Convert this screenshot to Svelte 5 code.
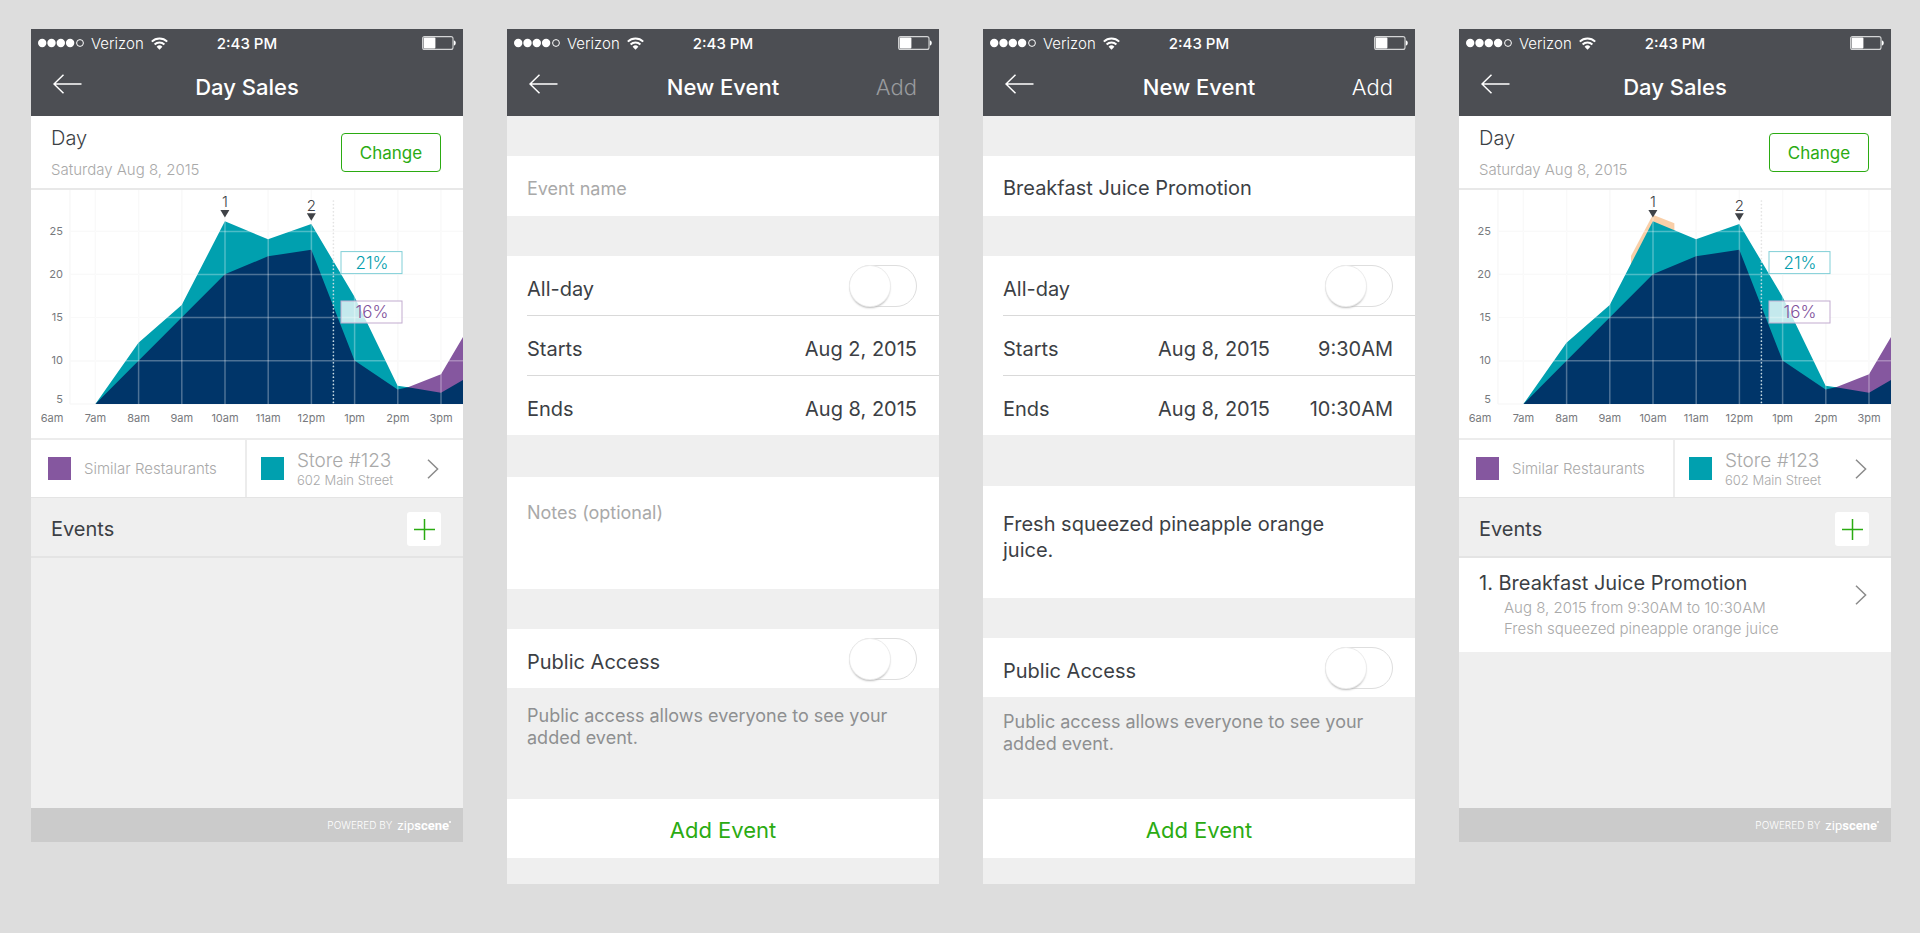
<script>
  const screens = [
    { id: 'sales-empty', type: 'sales', title: 'Day Sales', events: [] },
    { id: 'event-blank', type: 'form', title: 'New Event', name: '', notes: '', start: ['Aug 2, 2015'], end: ['Aug 8, 2015'] },
    {
      id: 'event-filled',
      type: 'form',
      title: 'New Event',
      name: 'Breakfast Juice Promotion',
      notes: 'Fresh squeezed pineapple orange juice.',
      start: ['Aug 8, 2015', '9:30AM'],
      end: ['Aug 8, 2015', '10:30AM'],
    },
    {
      id: 'sales-event',
      type: 'sales',
      title: 'Day Sales',
      events: [
        {
          name: 'Breakfast Juice Promotion',
          when: 'Aug 8, 2015 from 9:30AM to 10:30AM',
          notes: 'Fresh squeezed pineapple orange juice',
        },
      ],
    },
  ];

  // Chart geometry, in viewBox units
  const hours = ['7am', '8am', '9am', '10am', '11am', '12pm', '1pm', '2pm', '3pm'];
  const hourX = (i) => 64.4 + i * 43.2;
  const levels = [
    { label: '25', y: 41.4, textY: 45 },
    { label: '20', y: 84.4, textY: 88 },
    { label: '15', y: 127.5, textY: 131 },
    { label: '10', y: 170.8, textY: 174 },
    { label: '5', y: 214, textY: 213 },
  ];
  const storeArea = '64.4,214 107.5,152.7 150.7,115 193.9,31.3 237,49.3 280.3,34 323.5,106.7 366.6,195.7 377,197.3 377,214';
  const sharedArea = '64.4,214 107.5,170.7 150.7,127.4 193.9,84.3 237,66.3 280.3,59.7 323.5,170.4 366.6,199.4 377,197.3 410,202.7 432,190 432,214';
  const similarArea = '377,197.3 410,184.3 432,147 432,214 377,214';
  const eventArea = '172,66 193.9,24.7 215.4,33.3 215.4,60 172,90';
</script>

{#snippet header(screen)}
  <header class="header">
    <div class="status">
      <div class="carrier">
        <svg width="46" height="10" viewBox="0 0 46 10" aria-hidden="true">
          {#each [4.2, 13.5, 22.8, 32.1] as cx}
            <circle {cx} cy="5" r="4.2" fill="#fff" />
          {/each}
          <circle cx="42" cy="5" r="3.4" fill="none" stroke="#fff" />
        </svg>
        <span>Verizon</span>
        <svg width="17" height="13" viewBox="0 0 17 13" fill="none" stroke="#fff" stroke-width="2" aria-hidden="true">
          <path d="M.8 4.6a11 11 0 0 1 15.4 0" />
          <path d="M3.6 7.5a7 7 0 0 1 9.8 0" />
          <path d="M8.5 12.7 5.6 9.8a4.1 4.1 0 0 1 5.8 0z" fill="#fff" stroke="none" />
        </svg>
      </div>
      <span class="clock">2:43 PM</span>
      <svg class="battery" width="34" height="14" viewBox="0 0 34 14" aria-hidden="true">
        <rect x=".6" y=".6" width="30.4" height="12.8" rx="2" fill="none" stroke="#d4d5d6" stroke-width="1.1" />
        <rect x="1.6" y="1.6" width="11.8" height="10.8" rx="1" fill="#fff" />
        <path d="M31.8 4.3c2.6.8 2.6 4.6 0 5.4z" fill="#fff" />
      </svg>
    </div>
    <nav class="nav">
      <button class="back" aria-label="Back">
        <svg width="29" height="20" viewBox="0 0 29 20" fill="none" stroke="#fff" stroke-width="1.5" aria-hidden="true">
          <path d="M10.5.8 1 10l9.5 9.2M1 10h27.5" />
        </svg>
      </button>
      <h1>{screen.title}</h1>
      {#if screen.type === 'form'}
        <button class="add" disabled={!screen.name}>Add</button>
      {/if}
    </nav>
  </header>
{/snippet}

{#snippet chevron()}
  <svg class="chevron" width="12" height="20" viewBox="0 0 12 20" fill="none" stroke="#8b8b8b" stroke-width="1.5" aria-hidden="true">
    <path d="M1 .8 10.6 10 1 19.2" />
  </svg>
{/snippet}

{#snippet chart(highlight)}
  <svg class="chart" viewBox="0 0 432 248" role="img" aria-label="Sales by hour">
    <g stroke="#f6f6f6" stroke-width="1.2">
      <path d="M39 0V214" />
      {#each hours as _, i}
        <path d="M{hourX(i)} 0V214" />
      {/each}
      {#each levels as level}
        <path d="M39 {level.y}H432" />
      {/each}
    </g>
    {#if highlight}
      <polygon points={eventArea} fill="#f9cfa8" />
    {/if}
    <polygon points={similarArea} fill="#85579f" />
    <polygon points={storeArea} fill="#00a0af" />
    <polygon points={sharedArea} fill="#003569" />
    <g stroke="#fff" stroke-opacity=".3" stroke-width="1.5">
      {#each hours as _, i}
        <path d="M{hourX(i)} 0V214" />
      {/each}
      {#each levels.slice(0, 4) as level}
        <path d="M39 {level.y}H432" />
      {/each}
    </g>
    <path d="M302.4 11V71" stroke="#e3e3e3" stroke-width="1.7" stroke-linecap="round" stroke-dasharray="0 3.6" />
    <path d="M302.4 72V214" stroke="#c9dde4" stroke-width="1.7" stroke-linecap="round" stroke-dasharray="0 3.6" />

    <rect x="310" y="61.6" width="61" height="22" fill="#fff" stroke="#80cfd7" />
    <text class="percent" x="341" y="78.5" fill="#009dac">21%</text>
    <rect x="310" y="111" width="61" height="22" fill="#fff" fill-opacity=".77" stroke="#c2abcf" />
    <text class="percent" x="341" y="128" fill="#80519b">16%</text>

    <text class="marker" x="193.9" y="17">1</text>
    <path d="M189.4 20h9l-4.5 7.4z" fill="#3f4247" />
    <text class="marker" x="280.3" y="20.5">2</text>
    <path d="M275.8 23.3h9l-4.5 7.4z" fill="#3f4247" />

    {#each levels as level}
      <text class="tick end" x="32" y={level.textY}>{level.label}</text>
    {/each}
    <text class="tick" x="21" y="232">6am</text>
    {#each hours as hour, i}
      <text class="tick" x={hourX(i)} y="232">{hour}</text>
    {/each}
  </svg>
{/snippet}

{#snippet salesScreen(screen)}
  <section class="day">
    <div>
      <h2>Day</h2>
      <p>Saturday Aug 8, 2015</p>
    </div>
    <button class="change">Change</button>
  </section>
  {@render chart(screen.events.length > 0)}
  <div class="legend">
    <div class="legend-cell">
      <span class="swatch similar"></span>
      <span class="legend-name">Similar Restaurants</span>
    </div>
    <a class="legend-cell" href="#store">
      <span class="swatch store"></span>
      <span class="store-text">
        <span class="store-name">Store #123</span>
        <span class="store-address">602 Main Street</span>
      </span>
      {@render chevron()}
    </a>
  </div>
  <div class="events-bar">
    <h2>Events</h2>
    <button class="plus" aria-label="Add event">
      <svg width="21" height="21" viewBox="0 0 21 21" stroke="#2bab12" stroke-width="1.5" aria-hidden="true">
        <path d="M10.5 0v21M0 10.5h21" />
      </svg>
    </button>
  </div>
  {#each screen.events as event, i}
    <a class="event" href="#event">
      <span class="event-text">
        <span class="event-name">{i + 1}. {event.name}</span>
        <span class="event-detail">{event.when}</span>
        <span class="event-detail">{event.notes}</span>
      </span>
      {@render chevron()}
    </a>
  {/each}
  <footer class="footer">
    <span>POWERED BY</span>
    <span class="logo">zip<b>scene</b><i></i></span>
  </footer>
{/snippet}

{#snippet dateRow(id, label, values)}
  <div class="row">
    <label for={id}>{label}</label>
    {#each values as value, i}
      <input class={i ? 'time' : 'date'} id={i ? `${id}-time` : id} type="text" {value} aria-label={i ? `${label} time` : undefined} />
    {/each}
  </div>
{/snippet}

{#snippet formScreen(screen)}
  <form class="form" class:filled={screen.name}>
    <div class="group">
      <input class="name" type="text" placeholder="Event name" aria-label="Event name" value={screen.name} />
    </div>
    <div class="group">
      <div class="row">
        <label for="{screen.id}-allday">All-day</label>
        <input class="switch" id="{screen.id}-allday" type="checkbox" />
      </div>
      {@render dateRow(`${screen.id}-start`, 'Starts', screen.start)}
      {@render dateRow(`${screen.id}-end`, 'Ends', screen.end)}
    </div>
    <div class="group notes-group">
      <textarea class="notes" placeholder="Notes (optional)" aria-label="Notes" value={screen.notes}></textarea>
    </div>
    <div class="group">
      <div class="row">
        <label for="{screen.id}-public">Public Access</label>
        <input class="switch" id="{screen.id}-public" type="checkbox" />
      </div>
    </div>
    <p class="hint">Public access allows everyone to see your added event.</p>
    <button class="submit" type="button">Add Event</button>
  </form>
{/snippet}

<main class="board">
  {#each screens as screen (screen.id)}
    <article class="screen">
      {@render header(screen)}
      {#if screen.type === 'sales'}
        {@render salesScreen(screen)}
      {:else}
        {@render formScreen(screen)}
      {/if}
    </article>
  {/each}
</main>

<style>
  :global(body) {
    margin: 0;
    background: #ddd;
  }
  .board {
    display: grid;
    grid-template-columns: repeat(4, minmax(0, 1fr));
    align-items: start;
    gap: 44px;
    padding: 29px 29px 29px 31px;
    color: #3c3f45;
    font-family: Inter, "Liberation Sans", sans-serif;
    font-size: 20px;
    font-weight: 300;
  }
  .board * {
    box-sizing: border-box;
  }
  h1,
  h2,
  p {
    margin: 0;
    font-weight: inherit;
  }
  button,
  input,
  textarea {
    margin: 0;
    padding: 0;
    border: 0;
    background: none;
    color: inherit;
    font: inherit;
  }
  a {
    color: inherit;
    text-decoration: none;
  }
  svg {
    display: block;
    flex: none;
  }
  .screen {
    display: flex;
    flex-direction: column;
    min-height: 813px;
    background: #efefef;
  }

  /* Header */
  .header {
    background: #4c4e53;
    color: #fff;
  }
  .status {
    display: grid;
    grid-template-columns: 1fr auto 1fr;
    align-items: center;
    height: 28px;
    padding: 0 7px;
    font-size: 15px;
  }
  .carrier {
    display: flex;
    align-items: center;
    gap: 7px;
  }
  .clock {
    font-weight: 500;
  }
  .battery {
    justify-self: end;
  }
  .nav {
    display: grid;
    grid-template-columns: 1fr auto 1fr;
    align-items: center;
    height: 59px;
    padding: 0 22px;
  }
  h1 {
    font-size: 22px;
    font-weight: 500;
  }
  .back {
    justify-self: start;
    padding-bottom: 5px;
  }
  .add {
    justify-self: end;
    font-size: 22px;
  }
  .add:disabled {
    color: #999b9e;
  }

  /* Sales screen */
  .day {
    display: flex;
    align-items: flex-start;
    justify-content: space-between;
    padding: 8px 22px 4px 20px;
    border-bottom: 2px solid #e8e8e8;
    background: #fff;
  }
  h2 {
    font-size: 20px;
    line-height: 28px;
  }
  .day p {
    margin-top: 4px;
    color: #a9a9a9;
    font-size: 15px;
    line-height: 28px;
  }
  .change {
    width: 100px;
    height: 39px;
    margin-top: 9px;
    border: 1px solid #2bab12;
    border-radius: 4px;
    color: #2bab12;
    font-size: 17px;
    font-weight: 400;
  }
  .chart {
    width: 100%;
    background: #fff;
  }
  .chart text {
    text-anchor: middle;
  }
  .chart .tick {
    fill: #77797d;
    font-size: 11px;
    font-weight: 400;
  }
  .chart .end {
    text-anchor: end;
  }
  .percent {
    font-size: 17px;
  }
  .marker {
    fill: #3f4247;
    font-size: 15px;
  }
  .legend {
    display: grid;
    grid-template-columns: 1fr 1fr;
    border-top: 2px solid #ececec;
    border-bottom: 1px solid #e4e4e4;
    background: #fff;
    color: #a9a9a9;
  }
  .legend-cell {
    display: flex;
    align-items: center;
    gap: 13px;
    height: 57px;
    padding: 0 24px 0 14px;
  }
  .legend-cell:first-child {
    padding-left: 17px;
    border-right: 2px solid #ececec;
  }
  .swatch {
    flex: none;
    width: 23px;
    height: 23px;
  }
  .similar {
    background: #85579f;
  }
  .store {
    background: #00a0af;
  }
  .legend-name {
    font-size: 15px;
  }
  .store-text,
  .event-text {
    display: flex;
    flex-direction: column;
  }
  .store-text {
    padding-top: 2px;
  }
  .store-name {
    font-size: 19px;
    line-height: 20px;
  }
  .store-address {
    font-size: 13px;
    line-height: 18px;
  }
  .chevron {
    margin-left: auto;
  }
  .events-bar {
    display: flex;
    align-items: center;
    justify-content: space-between;
    height: 60px;
    padding: 4px 22px 0 20px;
    border-bottom: 2px solid #e4e4e4;
  }
  .plus {
    display: grid;
    place-items: center;
    width: 34px;
    height: 34px;
    border-radius: 3px;
    background: #fff;
  }
  .event {
    display: flex;
    padding: 11px 24px 13px 20px;
    background: #fff;
  }
  .event .chevron {
    margin-top: 16px;
  }
  .event-name {
    font-size: 20px;
    line-height: 28px;
  }
  .events-bar h2,
  .event-name {
    font-weight: 400;
  }
  .event-detail {
    padding-left: 25px;
    color: #a9a9a9;
    font-size: 15px;
    line-height: 21px;
  }
  .footer {
    display: flex;
    align-items: center;
    justify-content: flex-end;
    gap: 5px;
    height: 34px;
    margin-top: auto;
    padding: 0 12px;
    background: #cbcbcb;
    color: #fff;
    font-size: 10px;
  }
  .logo {
    display: flex;
    font-family: Roboto, sans-serif;
    font-size: 13px;
    font-weight: 400;
  }
  .logo i {
    width: 2px;
    height: 2px;
    margin-top: 3px;
    border-radius: 50%;
    background: #fff;
  }

  /* Event form */
  .form {
    display: flex;
    flex-direction: column;
    min-height: 768px;
    padding-bottom: 26px;
    font-weight: 400;
  }
  .group {
    margin-top: 40px;
    background: #fff;
  }
  .name {
    display: block;
    width: 100%;
    height: 60px;
    padding: 4px 22px 0 20px;
  }
  .name::placeholder,
  .notes::placeholder {
    color: #a9a9a9;
    font-size: 18px;
    opacity: 1;
  }
  .row {
    display: flex;
    align-items: center;
    height: 59px;
    margin-left: 20px;
    padding-right: 22px;
  }
  .row + .row {
    height: 60px;
    border-top: 1px solid #d9d9d9;
  }
  .row label {
    flex: 1;
    padding-top: 6px;
  }
  .date,
  .time {
    width: 123px;
    padding-top: 6px;
    text-align: right;
  }
  .switch {
    width: 68px;
    height: 42px;
    border: 1px solid #dedede;
    border-radius: 21px;
    appearance: none;
  }
  .switch::before {
    content: "";
    display: block;
    width: 40px;
    height: 40px;
    border-radius: 50%;
    background: #fff;
    box-shadow: 0 0 0 1px #ececec, 0 2px 2px #bbb;
  }
  .switch:checked {
    background: #2bab12;
  }
  .switch:checked::before {
    margin-left: 26px;
  }
  .notes-group {
    margin-top: 42px;
  }
  .filled .notes-group {
    margin-top: 51px;
  }
  .notes {
    display: block;
    width: 100%;
    height: 112px;
    padding: 23px 60px 0 20px;
    line-height: 26px;
    resize: none;
  }
  .filled .notes {
    padding-top: 25px;
  }
  .hint {
    padding: 17px 40px 20px 20px;
    color: #8e8f91;
    font-size: 18px;
    line-height: 22px;
  }
  .filled .hint {
    padding-top: 14px;
  }
  .submit {
    height: 59px;
    margin-top: auto;
    padding-top: 2px;
    background: #fff;
    color: #2bab12;
    font-size: 22px;
  }
</style>
